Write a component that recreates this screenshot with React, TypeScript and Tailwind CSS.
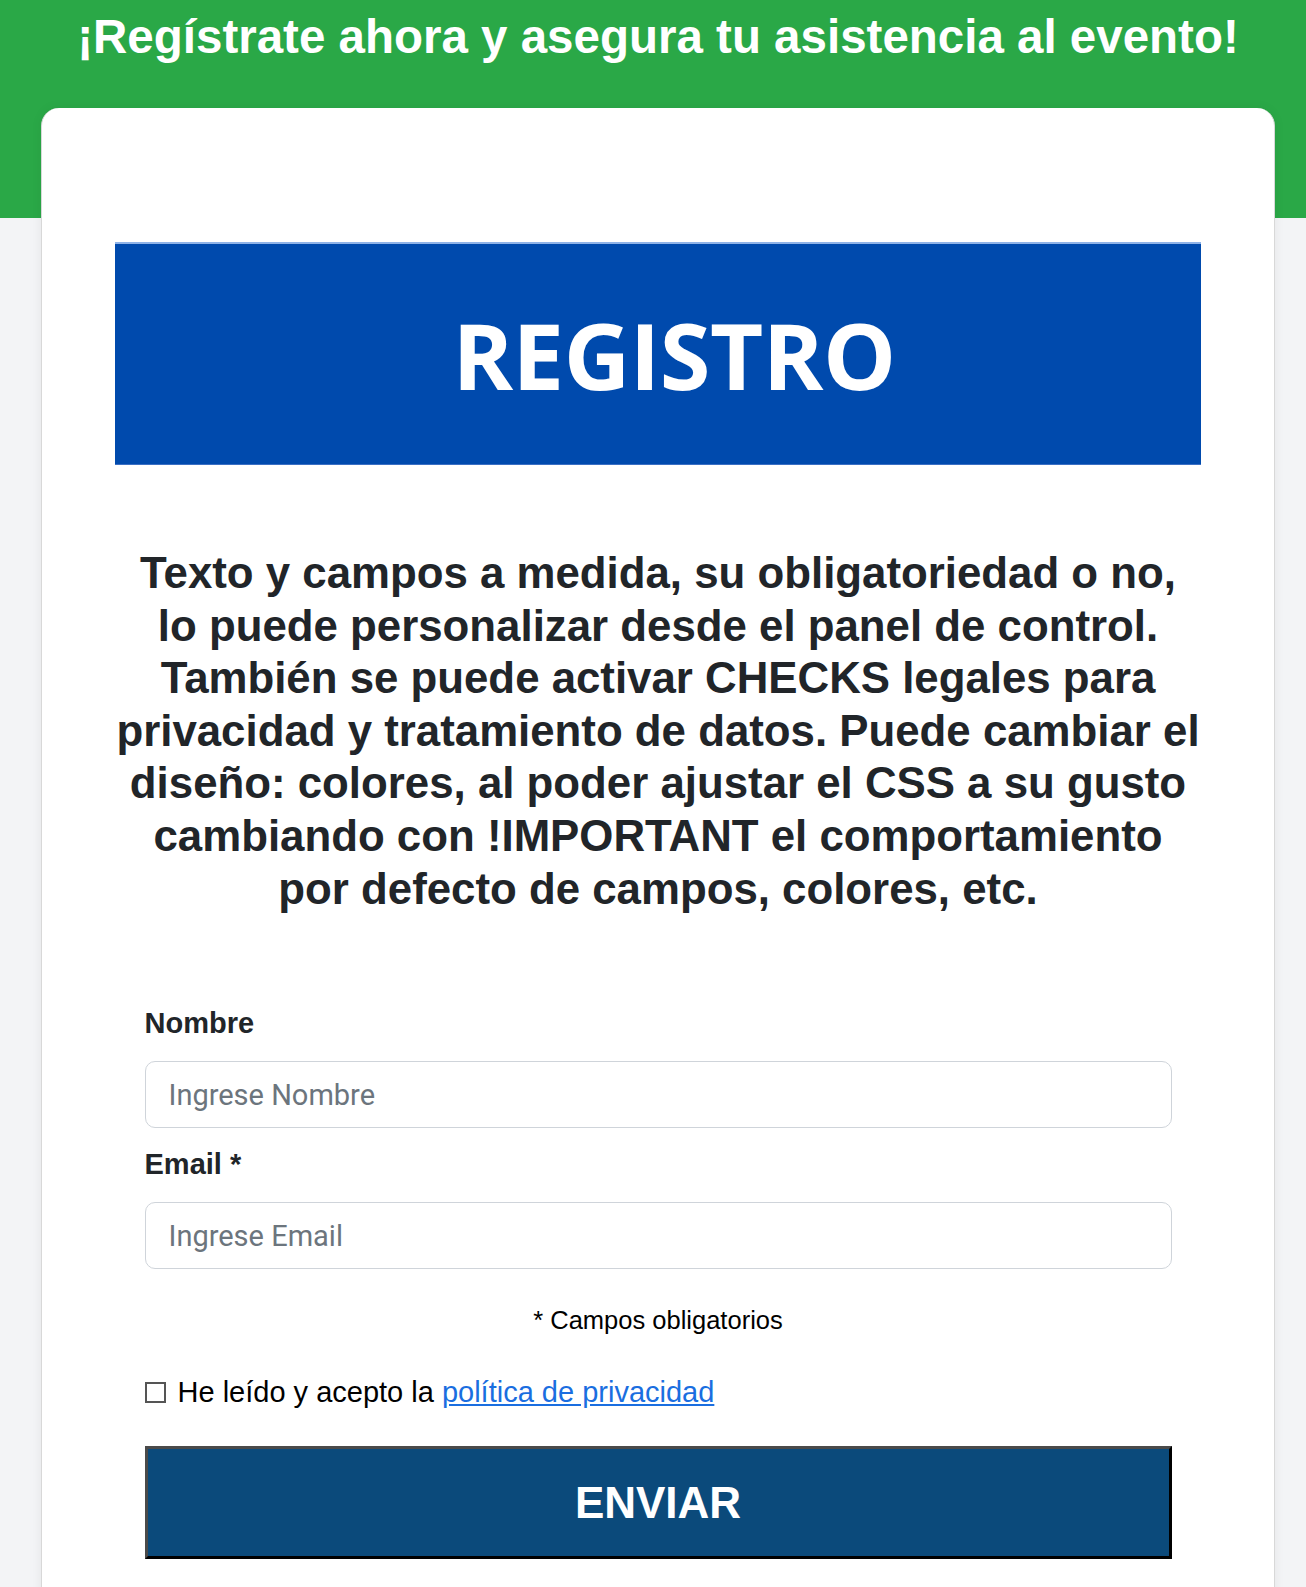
import React, { useState } from 'react';

const lines = [
  'Texto y campos a medida, su obligatoriedad o no,',
  'lo puede personalizar desde el panel de control.',
  'También se puede activar CHECKS legales para',
  'privacidad y tratamiento de datos. Puede cambiar el',
  'diseño: colores, al poder ajustar el CSS a su gusto',
  'cambiando con !IMPORTANT el comportamiento',
  'por defecto de campos, colores, etc.',
];

export default function App() {
  const [nombre, setNombre] = useState('');
  const [email, setEmail] = useState('');
  const [acepto, setAcepto] = useState(false);

  return (
    <div className="min-h-[1587px] overflow-hidden bg-[#f3f4f6] font-['Liberation_Sans',Arial,sans-serif]">
      {/* franja verde superior */}
      <div className="h-[218px] bg-[#2aa847] pt-[9px]">
        <h1 className="ml-[41px] w-[1234px] whitespace-nowrap text-center text-[47.5px] font-bold leading-[56px] text-white">
          ¡Regístrate ahora y asegura tu asistencia al evento!
        </h1>
      </div>

      <div className="-mt-[110px] ml-[41px] w-[1234px] rounded-t-[18px] border-x border-[#d8d8d8] bg-white pb-[80px] pt-[134px] shadow-[0_0_12px_rgba(0,0,0,0.06)]">
        <div className="mx-auto flex h-[223px] w-[1086px] items-center justify-center border-b border-t-2 border-b-[#3a6fc4] border-t-[#8fb3e8] bg-[#004aad] pl-[32px] pt-[2px]">
          <span className="font-['Open_Sans',sans-serif] text-[92px] font-bold leading-none tracking-[-0.5px] text-white">REGISTRO</span>
        </div>

        <p className="mx-auto mt-[82px] w-[1100px] whitespace-nowrap text-center text-[43.8px] font-bold leading-[52.6px] text-[#212529]">
          {lines.map((l, i) => (
            <React.Fragment key={i}>
              {l}
              {i < lines.length - 1 && <br />}
            </React.Fragment>
          ))}
        </p>

        <form className="mx-auto mt-[90px] w-[1027px]" onSubmit={(e) => e.preventDefault()}>
          <label className="block text-[29px] font-bold leading-[36px] text-[#212529]">Nombre</label>
          <input
            className="mt-[20px] h-[67px] w-full rounded-[10px] border border-[#cfd4da] px-[23px] font-['Roboto',sans-serif] text-[29px] text-[#212529] placeholder:text-[#6c757d] focus:outline-none"
            placeholder="Ingrese Nombre"
            value={nombre}
            onChange={(e) => setNombre(e.target.value)}
          />
          <label className="mt-[18px] block text-[29px] font-bold leading-[36px] text-[#212529]">Email *</label>
          <input
            type="email"
            className="mt-[20px] h-[67px] w-full rounded-[10px] border border-[#cfd4da] px-[23px] font-['Roboto',sans-serif] text-[29px] text-[#212529] placeholder:text-[#6c757d] focus:outline-none"
            placeholder="Ingrese Email"
            value={email}
            onChange={(e) => setEmail(e.target.value)}
          />

          <div className="mt-[36px] text-center text-[25.5px] leading-[30px] text-black">* Campos obligatorios</div>

          <label className="mt-[39px] flex items-center gap-[12px] text-[29px] leading-[36px] text-black">
            <input
              type="checkbox"
              checked={acepto}
              onChange={(e) => setAcepto(e.target.checked)}
              className="h-[21px] w-[21px] appearance-none border-2 border-[#555] bg-white checked:bg-[#1a6fe0]"
            />
            <span>
              He leído y acepto la{' '}
              <a href="#" className="text-[#1a6ee0] underline">política de privacidad</a>
            </span>
          </label>

          <button
            type="submit"
            className="mt-[36px] h-[113px] w-full border-[3px] border-b-black border-l-[#4a4a4a] border-r-black border-t-[#4a4a4a] bg-[#0b4a7b] text-[44px] font-bold text-white"
          >
            ENVIAR
          </button>
        </form>
      </div>
    </div>
  );
}
